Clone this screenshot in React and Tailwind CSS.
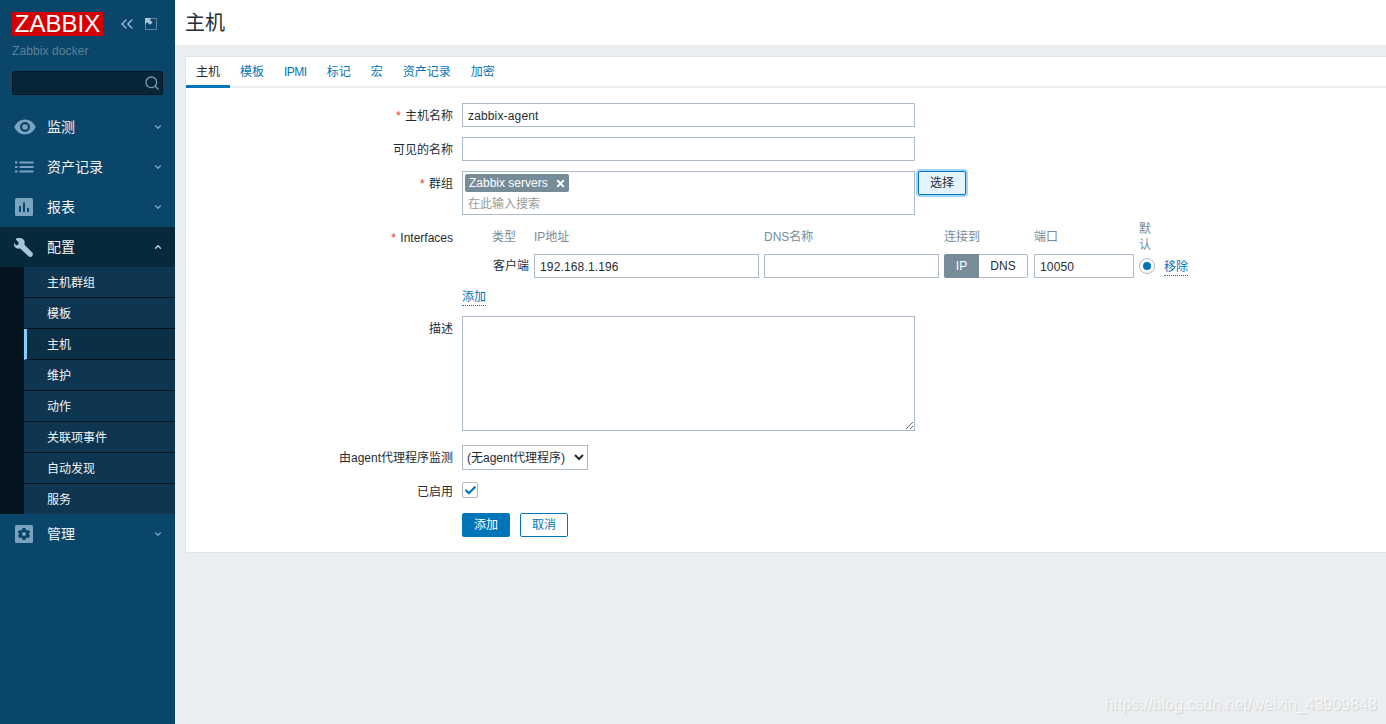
import { Search, X, ChevronDown, ChevronUp, ChevronsLeft, Check } from 'lucide-react';

const FONT = '[font-family:"Liberation_Sans","Noto_Sans_CJK_SC",Arial,sans-serif]';

const EyeIcon = () => (
  <svg width="22" height="16" viewBox="0 0 22 16" fill="#7aa3bf">
    <path fillRule="evenodd" d="M11 .5C6 .5 2.300 3.500.2 8c2.100 4.500 5.800 7.500 10.800 7.500S19.700 12.500 21.800 8C19.700 3.500 16 .5 11 .5ZM11 3a5 5 0 1 1 0 10 5 5 0 0 1 0-10Zm0 2.200a2.800 2.800 0 1 0 0 5.600 2.800 2.800 0 0 0 0-5.600Z" />
  </svg>
);

const ListIcon = () => (
  <svg width="19" height="12" viewBox="0 0 19 12" fill="#7aa3bf">
    <rect x="0" y="0.500" width="2.500" height="2" />
    <rect x="4.500" y="0.500" width="14" height="2" />
    <rect x="0" y="5" width="2.500" height="2" />
    <rect x="4.500" y="5" width="14" height="2" />
    <rect x="0" y="9.500" width="2.500" height="2" />
    <rect x="4.500" y="9.500" width="14" height="2" />
  </svg>
);

const ChartIcon = () => (
  <svg width="18" height="18" viewBox="0 0 18 18">
    <rect width="18" height="18" rx="1.500" fill="#7aa3bf" />
    <rect x="4" y="8" width="2" height="6" fill="#0a466a" />
    <rect x="8" y="4.500" width="2" height="9.500" fill="#0a466a" />
    <rect x="12" y="10" width="2" height="4" fill="#0a466a" />
  </svg>
);

const WrenchIcon = () => (
  <svg width="19" height="19" viewBox="0 0 19 19" fill="#a9c6d9">
    <path d="M7.500.3a5 5 0 0 0-5.900 1L4.700 4.500 4.200 6.800 2 7.300-.1 4.700a5 5 0 0 0 6.300 5.800l8.600 8c.8.700 2 .7 2.800-.1l.8-.8c.8-.8.800-2 0-2.800l-8.100-8.300A5 5 0 0 0 7.500.3Z" />
  </svg>
);

const GearIcon = () => (
  <svg width="18" height="18" viewBox="0 0 18 18">
    <rect width="18" height="18" rx="1.500" fill="#7aa3bf" />
    <path fill="#0a466a" fillRule="evenodd" d="M7.500 3h3l.4 1.700 1.200.7 1.700-.5 1.400 2.400-1.200 1.200v1l1.200 1.200-1.400 2.400-1.700-.5-1.200.7L10.500 15h-3l-.4-1.700-1.200-.7-1.700.5-1.400-2.400L4 9.500v-1L2.800 7.300l1.400-2.400 1.700.5 1.200-.7L7.500 3ZM9 7a2 2 0 1 0 0 4 2 2 0 0 0 0-4Z" />
  </svg>
);

const KioskIcon = () => (
  <svg width="12" height="12" viewBox="0 0 12 12" className="text-[#a9c6d9]">
    <rect x="0.500" y="0.500" width="11" height="11" fill="none" stroke="currentColor" strokeDasharray="1 1" />
    <path d="M0 0h6.500L4.800 1.700 7.500 4.400 5 6.800 2.200 4.200 0 6.500Z" fill="currentColor" />
  </svg>
);

const MenuItem = ({ icon, label, open }) => (
  <div className={`flex items-center h-10 pr-3 ${open ? 'bg-[#07293c]' : ''}`}>
    <div className="w-[47px] pl-[14px] flex items-center">{icon}</div>
    <span className="flex-1 text-[14px] text-[#f2f5f7]">{label}</span>
    {open ? (
      <ChevronUp size={10} strokeWidth={3} className="text-[#c5d6e1]" />
    ) : (
      <ChevronDown size={10} strokeWidth={3} className="text-[#7aa3bf]" />
    )}
  </div>
);

const subItems = ['主机群组', '模板', '主机', '维护', '动作', '关联项事件', '自动发现', '服务'];

const Sidebar = () => (
  <aside className="w-[175px] shrink-0 bg-[#0a466a]">
    <div className="flex items-center pl-3 pt-3">
      <div className="w-[91px] h-6 bg-[#d40000] text-white text-[24px] leading-6 text-center font-normal">ZABBIX</div>
      <ChevronsLeft size={20} strokeWidth={1.500} className="ml-[14px] text-[#a9c6d9]" />
      <div className="ml-[8px]">
        <KioskIcon />
      </div>
    </div>
    <div className="pl-3 mt-[7px] text-[12px] leading-4 tracking-[0.1px] text-[#5f8199]">Zabbix docker</div>
    <div className="mx-3 mt-[12px] h-6 bg-[#082638] border border-[#021722] rounded-[2px] flex items-center justify-end pr-[2px]">
      <Search size={16} strokeWidth={2} className="text-[#7d9bb0]" />
    </div>
    <nav className="mt-[12px]">
      <MenuItem icon={<EyeIcon />} label="监测" />
      <MenuItem icon={<div className="pl-[1px]"><ListIcon /></div>} label="资产记录" />
      <MenuItem icon={<div className="pl-[1px]"><ChartIcon /></div>} label="报表" />
      <MenuItem icon={<WrenchIcon />} label="配置" open />
      <ul className="pl-6 bg-[#04151f]">
        {subItems.map((name) => (
          <li
            key={name}
            className={`h-[31px] last:h-[30px] pt-[2px] flex items-center text-[12px] text-[#f2f5f7] border-b border-[#04151f] last:border-b-0 ${
              name === '主机' ? 'bg-[#0a2f47] border-l-[3px] border-l-[#7dd0ff] pl-5' : 'bg-[#0e3650] pl-[23px]'
            }`}
          >
            {name}
          </li>
        ))}
      </ul>
      <MenuItem icon={<div className="pl-[1px]"><GearIcon /></div>} label="管理" />
    </nav>
  </aside>
);

const tabs = ['主机', '模板', 'IPMI', '标记', '宏', '资产记录', '加密'];

const Tabs = () => (
  <div className="flex h-[31px] border-b-2 border-[#ebeef0]">
    {tabs.map((t, i) => (
      <div
        key={t}
        className={`px-[10px] h-[31px] leading-[30px] text-[12px] ${
          i === 0 ? 'text-[#1f2c33] border-b-[3px] border-[#0275b8]' : 'text-[#0275b8]'
        } ${t === 'IPMI' ? 'tracking-[-0.5px]' : ''}`}
      >
        {t}
      </div>
    ))}
  </div>
);

const Label = ({ required, children }) => (
  <div className="w-[267px] h-6 shrink-0 pt-[1px] text-right text-[12px] leading-[24px] text-[#1f2c33]">
    {required && <span className="text-[#e33734] mr-[1px]">* </span>}
    {children}
  </div>
);

const Row = ({ label, required, className = '', children }) => (
  <div className={`flex gap-[9px] ${className}`}>
    <Label required={required}>{label}</Label>
    <div className="flex-1">{children}</div>
  </div>
);

const inputCls =
  'block h-6 border border-[#acbbc7] bg-white px-[5px] pt-[2px] text-[12px] text-[#1f2c33] tracking-[0.15px] outline-none';

const headCls = 'text-[#768d99] h-6 leading-6';

const Interfaces = () => (
  <div className="grid grid-cols-[67px_225px_175px_84px_100px_auto] gap-x-[5px] items-start text-[12px]">
    <div className={`${headCls} pl-[30px]`}>类型</div>
    <div className={headCls}>IP地址</div>
    <div className={headCls}>DNS名称</div>
    <div className={headCls}>连接到</div>
    <div className={`${headCls} ml-[1px]`}>端口</div>
    <div className="h-6 flex items-center ml-[1px]">
      <div className="text-[#768d99] w-[14px] leading-[16px]">默认</div>
    </div>
    <div className="text-right text-[#1f2c33] leading-6 mt-[5px]">客户端</div>
    <input readOnly value="192.168.1.196" className={`${inputCls} w-[225px] mt-[5px]`} />
    <input readOnly value="" className={`${inputCls} w-[175px] mt-[5px]`} />
    <div className="flex h-6 mt-[5px] w-[84px] text-[12px]">
      <div className="w-[35px] bg-[#768d99] text-white text-center leading-6 rounded-l-[2px]">IP</div>
      <div className="flex-1 border border-l-0 border-[#acbbc7] text-[#1f2c33] text-center leading-[22px] rounded-r-[2px]">DNS</div>
    </div>
    <input readOnly value="10050" className={`${inputCls} w-[100px] mt-[5px] ml-[1px]`} />
    <div className="flex items-center h-6 mt-[5px] gap-[9px] ml-[1px]">
      <div className="w-4 h-4 rounded-full border border-[#acbbc7] flex items-center justify-center">
        <div className="w-2 h-2 rounded-full bg-[#0275b8]" />
      </div>
      <a className="text-[#0275b8] border-b border-dotted border-[#0275b8] pt-[2px] leading-[16px] whitespace-nowrap">移除</a>
    </div>
  </div>
);

const Form = () => (
  <div className="pt-[15px] pb-[15px] flex flex-col">
    <Row label="主机名称" required>
      <input readOnly value="zabbix-agent" className={`${inputCls} w-[453px]`} />
    </Row>
    <Row label="可见的名称" className="mt-[10px]">
      <input readOnly value="" className={`${inputCls} w-[453px]`} />
    </Row>
    <Row label="群组" required className="mt-[10px]">
      <div className="flex items-start">
        <div className="w-[453px] h-[44px] border border-[#acbbc7] pl-[2px] pt-[2px]">
          <div className="flex w-fit items-center h-[18px] bg-[#768d99] text-white text-[12px] rounded-[2px] pl-1 pr-[3px]">
            Zabbix servers
            <X size={11} strokeWidth={4} className="ml-[7px]" />
          </div>
          <div className="text-[12px] text-[#9a9a9a] pl-[3px] leading-[20px] mt-[2px]">在此输入搜索</div>
        </div>
        <button className="ml-[3px] w-[48px] h-6 bg-[#e5f3fe] border border-[#0275b8] rounded-[2px] ring-2 ring-[#a3d5fb] text-[12px] text-[#1f2c33]">
          选择
        </button>
      </div>
    </Row>
    <Row label="Interfaces" required className="mt-[10px]">
      <Interfaces />
    </Row>
    <Row label="" className="mt-[6px]">
      <a className="inline-block text-[12px] text-[#0275b8] border-b border-dotted border-[#0275b8] leading-[16px]">添加</a>
    </Row>
    <Row label="描述" className="mt-[8px]">
      <textarea readOnly className="block w-[453px] h-[115px] border border-[#acbbc7] outline-none" />
    </Row>
    <Row label="由agent代理程序监测" className="mt-[14px]">
      <select className="block w-[126px] h-[25px] border border-[#acbbc7] bg-white text-[12px] text-[#1f2c33] outline-none">
        <option>(无agent代理程序)</option>
      </select>
    </Row>
    <Row label="已启用" className="mt-[9px]">
      <div className="w-[16px] h-[16px] mt-[3px] border border-[#acbbc7] rounded-[2px] flex items-center justify-center">
        <Check size={13} strokeWidth={4} className="text-[#0275b8]" />
      </div>
    </Row>
    <Row label="" className="mt-[10px]">
      <div className="flex gap-[10px]">
        <button className="w-[48px] h-6 bg-[#0275b8] text-white text-[12px] rounded-[2px]">添加</button>
        <button className="w-[48px] h-6 border border-[#0275b8] text-[#0275b8] text-[12px] rounded-[2px]">取消</button>
      </div>
    </Row>
  </div>
);

export default function App() {
  return (
    <div className={`relative flex h-[724px] overflow-hidden bg-[#ebeef0] ${FONT}`}>
      <Sidebar />
      <main className="flex-1 min-w-0">
        <header className="h-[45px] bg-white pl-[10px] text-[20px] leading-[46px] text-[#1f2c33]">主机</header>
        <section className="ml-[10px] mt-[11px] bg-white border border-r-0 border-[#dfe4e7]">
          <Tabs />
          <Form />
        </section>
      </main>
      <div className="absolute right-[9px] bottom-[9px] text-[16px] leading-5 text-white/70 [text-shadow:1px_1px_1px_rgba(0,0,0,0.12)]">https://blog.csdn.net/weixin_43909848</div>
    </div>
  );
}
